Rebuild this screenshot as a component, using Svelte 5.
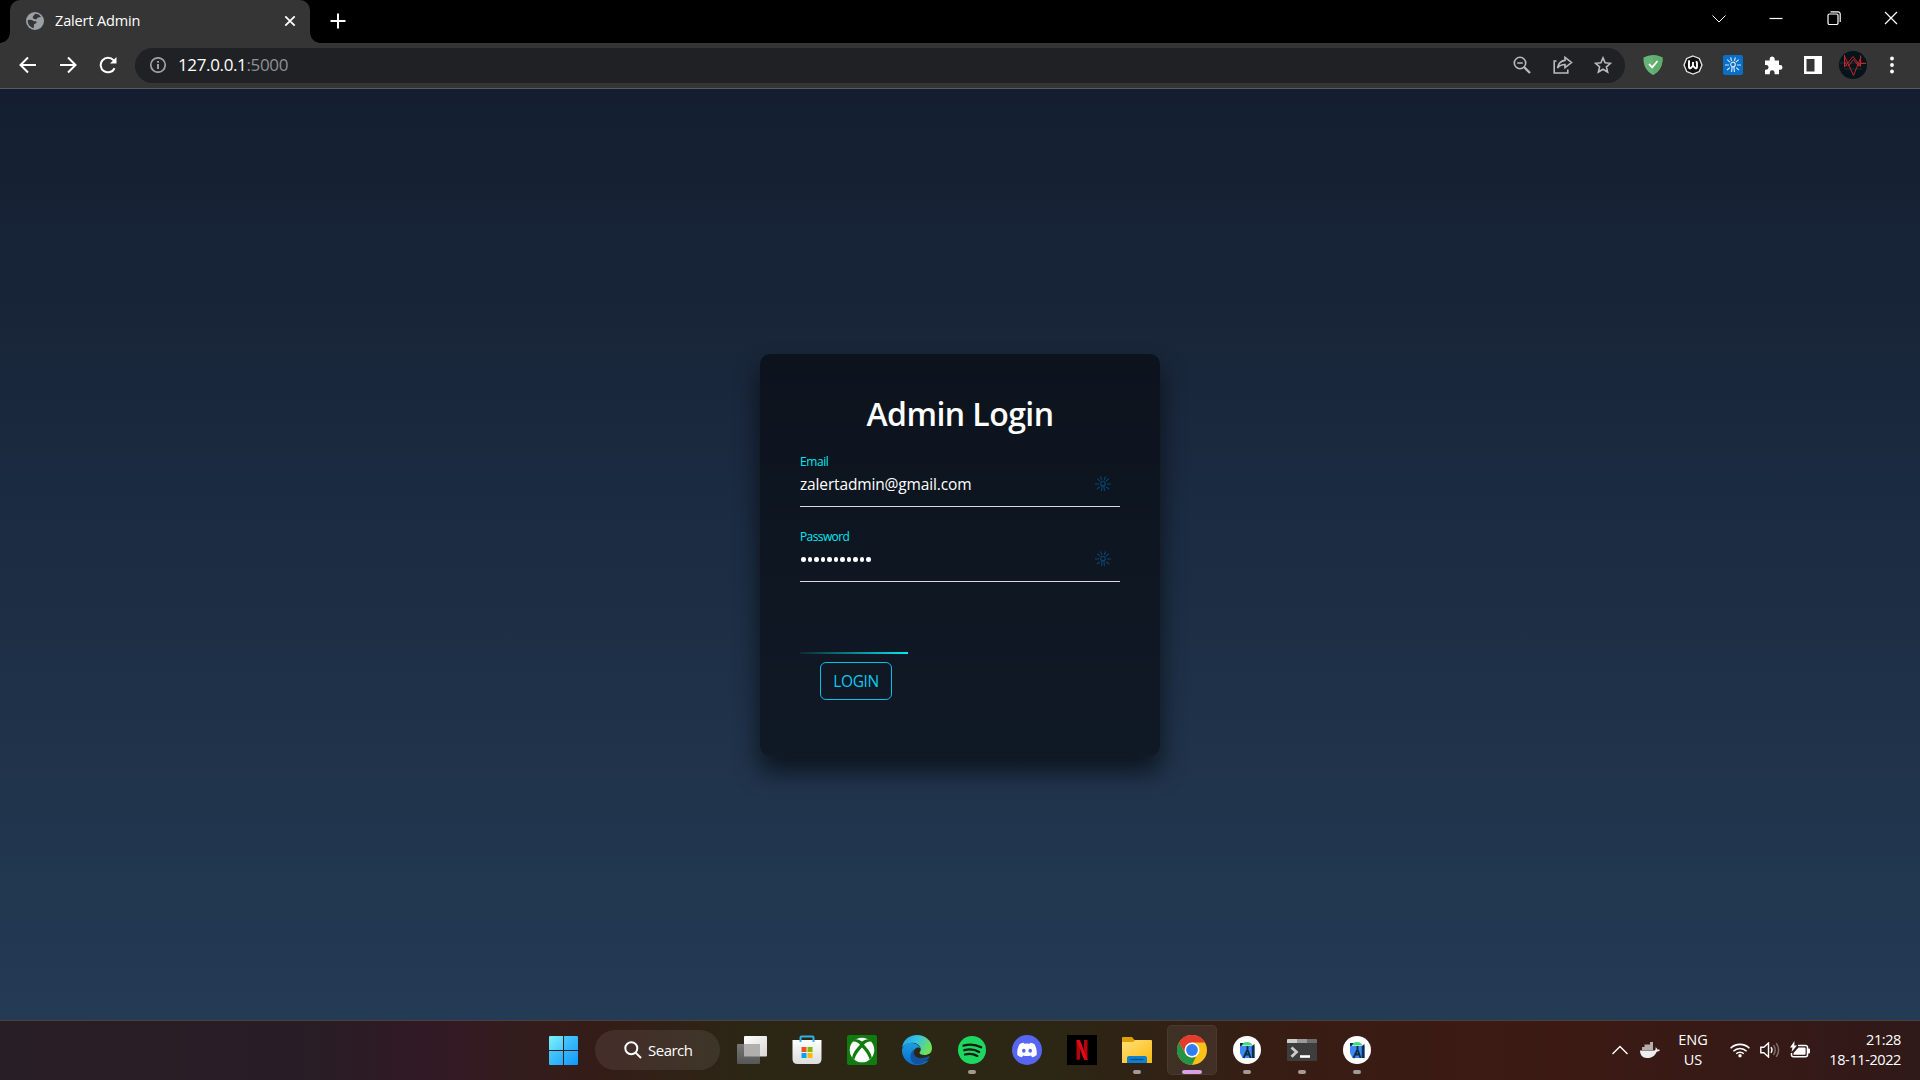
<script>
  const dots = Array.from({ length: 11 }, (_, i) => i);
</script>

{#snippet sun(color, w)}
  <svg viewBox="0 0 16 16" width="16" height="16" fill="none" stroke={color} stroke-width={w}>
    <circle cx="8" cy="7.5" r="2.3" />
    <path d="M7.2 9.5 6.5 15M8.8 9.5 9.5 15M0 8h4M12 8h4M2.2 2.6l2.9 2.5M13.8 2.6l-2.9 2.5M5.6.3l1 3.6M10.4.3l-1 3.6M2 13l2.900-2.400M14 13l-2.900-2.400" />
  </svg>
{/snippet}

{#snippet studio()}
  <svg viewBox="0 0 28 28" width="28" height="28">
    <circle cx="14" cy="14" r="14" fill="#fff" />
    <path d="M7 10h14.500v12H9.500L7 17z" fill="#4285f4" />
    <path d="M8.500 9.500C9 7.500 11 6 14 6s4.800 1.200 5.300 3.500z" fill="#3ddc84" />
    <path d="M7 7h3.500L8.500 10H7zM18.800 10l2.700-2v14h-2.700z" fill="#0b3045" />
    <path d="M14.500 10v5M14 14.500 10.500 22M15 14.500l2.500 7.500M11.500 18.500h5" stroke="#073042" stroke-width="1.800" fill="none" />
  </svg>
{/snippet}

<div class="desktop">
  <header class="tabs">
    <div class="tab">
      <svg class="globe" viewBox="0 0 18 18" width="18" height="18">
        <circle cx="9" cy="9" r="9" fill="#9aa0a6" />
        <path d="M1.800 8.200c1.900-.6 3.700-.6 5 .3 1 .8 2 .9 3 .8.9.2 1 1.200.3 1.900-.7.500-1.900.500-2.100 1.500-.1 1 .2 2.300-.5 3.200C4.300 15.400 1.400 12.300 1.800 8.200zM9.200 1.800c2.300 0 4.500 1.200 5.800 3.200-1.200-.2-1.900.6-3 .4-.8 0-.6 1-1.300 1.500-.8.5-1.700.2-2.600 0C7 6.500 6.200 5.600 7 4.600 7.600 3.800 8.200 2.800 9.200 1.800z" fill="#353535" />
      </svg>
      <span class="tabname">Zalert Admin</span>
      <svg class="tabx" viewBox="0 0 12 12" width="12" height="12" stroke="#fff" stroke-width="1.800"><path d="M1.300 1.300l9.400 9.400M10.700 1.300 1.300 10.700" /></svg>
    </div>
    <svg class="plus" viewBox="0 0 16 16" width="16" height="16" stroke="#fff" stroke-width="2"><path d="M8 .5v15M.5 8h15" /></svg>
    <div class="winctl">
      <svg class="thin" viewBox="0 0 14 14" width="14" height="14"><path d="M.5 4.500 7 11 13.500 4.500" /></svg>
      <svg viewBox="0 0 14 14" width="14" height="14"><path d="M.5 7.500h13" /></svg>
      <svg viewBox="0 0 14 14" width="14" height="14"><rect x="1" y="3" width="10" height="10.500" rx="1.500" /><path d="M3.500.8H11a2.200 2.200 0 0 1 2.200 2.200v8" /></svg>
      <svg viewBox="0 0 14 14" width="14" height="14"><path d="M1 1l12 12M13 1 1 13" /></svg>
    </div>
  </header>

  <nav class="toolbar">
    <div class="navs">
      <svg viewBox="0 0 18 18" width="18" height="18"><path d="M17 9H2M9 1.500 1.500 9 9 16.500" /></svg>
      <svg viewBox="0 0 18 18" width="18" height="18"><path d="M1 9h15M9 1.500 16.500 9 9 16.500" /></svg>
      <svg viewBox="0 0 18 18" width="18" height="18"><path d="M15.600 12.200A7.300 7.300 0 1 1 14.500 4.200l1.500 1.800" /><path d="M17.500 1v6.500H11z" fill="#fff" stroke="none" /></svg>
    </div>
    <div class="omni">
      <svg viewBox="0 0 16 16" width="16" height="16" fill="none" stroke="#9aa0a6" stroke-width="1.700"><circle cx="8" cy="8" r="7.200" /><path d="M8 7v5M8 4v1.800" stroke-width="2" /></svg>
      <span class="url">127.0.0.1<i>:5000</i></span>
      <div class="omniicons">
        <svg viewBox="0 0 18 18" width="18" height="18"><circle cx="7" cy="7" r="5.700" /><path d="M4.200 7h5.600" stroke-width="1.500" /><path d="m11 11 6 6" stroke-width="2.300" /></svg>
        <svg viewBox="0 0 20 18" width="20" height="18"><path d="M3.500 5H1.200v12h13.600v-3.500" /><path d="M12 1.300 18.500 6.500 12 11.700V8.500c-3.500 0-5.600 1.100-7.500 3.500C5.200 8 7.500 5 12 4.400z" /></svg>
        <svg viewBox="0 0 18 18" width="18" height="18"><path d="m9 1.900 2.100 4.900 5.300.5-4 3.500 1.200 5.200L9 13.200 4.400 16l1.200-5.200-4-3.500 5.300-.5z" /></svg>
      </div>
    </div>
    <div class="exts">
      <svg viewBox="0 0 20 20" width="20" height="20"><path d="M.5 2.500Q5 0 10 0t9.500 2.500c.5 8-3 14-9.500 17.500C3.500 16.500 0 10.500.5 2.500z" fill="#67b279" /><path d="M10 0q5 0 9.500 2.500c.5 8-3 14-9.500 17.500z" fill="#5fad6a" /><path d="m6 9 3.200 3.400L14.500 6" fill="none" stroke="#fff" stroke-width="1.800" /></svg>
      <svg viewBox="0 0 20 20" width="20" height="20"><path d="m10 1 6.300 2.500L19 10l-2.700 6.500L10 19l-6.300-2.500L1 10l2.700-6.500z" fill="#111" stroke="#e8e8e8" stroke-width="1.300" /><path d="M5.200 6.300h.8v5.400q0 1.600 1.500 1.600L10 10.800l2.500 2.500q1.500 0 1.500-1.600V8q0-1.400-1.300-1.400M10 7v4" fill="none" stroke="#fff" stroke-width="1.900" /></svg>
      <span class="blue">{@render sun('#cfe6fa', 1.2)}</span>
      <svg viewBox="0 0 20 20" width="20" height="20"><path d="M2 5.500h4.700V4a2.500 2.500 0 0 1 5 0v1.500H16v4.600h1.200a2.300 2.300 0 0 1 0 4.600H16v4.500h-4.400v-1.500a2.400 2.400 0 0 0-4.800 0v1.500H2v-4.500h1.200a2.400 2.400 0 0 0 0-4.800H2z" fill="#fff" /></svg>
      <svg viewBox="0 0 18 18" width="18" height="18"><path d="M0 0h18v18H0zM2.500 3v12.500h8V3z" fill="#fff" fill-rule="evenodd" /></svg>
      <svg viewBox="0 0 28 28" width="28" height="28"><circle cx="14" cy="14" r="14" fill="#061318" /><path d="M1 12h26M5 18h18" stroke="#13333a" /><path d="M5.500 4v12L14 5.500l7.500 10V4.500M5.500 5l9 19.500L22 6M9 15.500l5.500-7L20 15.500M5.500 10l2.500 5M22 10l-2.500 5M22 12.500h5" fill="none" stroke="#c1252d" stroke-width="1" /></svg>
      <svg viewBox="0 0 4 18" width="4" height="18" fill="#fff"><circle cx="2" cy="2.500" r="1.900" /><circle cx="2" cy="9" r="1.900" /><circle cx="2" cy="15.500" r="1.900" /></svg>
    </div>
  </nav>

  <main>
    <form class="card" onsubmit={(e) => e.preventDefault()}>
      <h2><span>Admin Login</span></h2>
      <div class="field">
        <div class="label">Email</div>
        <div class="value"><span class="mail">zalertadmin@gmail.com</span><span class="hint">{@render sun('#0b4674', 1.1)}</span></div>
      </div>
      <div class="field">
        <div class="label tight">Password</div>
        <div class="value"><span class="dots">{#each dots as d (d)}<b></b>{/each}</span><span class="hint">{@render sun('#0b4674', 1.1)}</span></div>
      </div>
      <div class="action">
        <div class="beam"></div>
        <button type="button"><span>LOGIN</span></button>
      </div>
    </form>
  </main>

  <footer>
    <div class="apps">
      <div class="app">
        <svg viewBox="0 0 29 29" width="29" height="29">
          <defs><linearGradient id="win" x1="0" y1="0" x2="1" y2="1"><stop offset="0" stop-color="#7af0ff" /><stop offset="1" stop-color="#4accfb" /></linearGradient>
            <linearGradient id="win2" x1="0" y1="0" x2="1" y2="1"><stop offset="0" stop-color="#62dcfb" /><stop offset="1" stop-color="#0f97fb" /></linearGradient></defs>
          <path d="M0 1q0-1 1-1h13v14H0z" fill="url(#win)" /><path d="M15 0h13q1 0 1 1v13H15zM0 15h14v14H1q-1 0-1-1zM15 15h14v13q0 1-1 1H15z" fill="url(#win2)" />
        </svg>
      </div>
      <div class="search">
        <svg viewBox="0 0 18 18" width="18" height="18" fill="none" stroke="#fff" stroke-width="2"><circle cx="7.300" cy="7.300" r="6" /><path d="m11.600 11.600 5.400 5.400" /></svg>
        <span>Search</span>
      </div>
      <div class="app">
        <svg viewBox="0 0 30 28" width="30" height="28">
          <defs><linearGradient id="tv" x1="0" y1="0" x2="1" y2="1"><stop offset="0" stop-color="#fff" /><stop offset="1" stop-color="#d8d6d4" /></linearGradient>
            <linearGradient id="tv2" x1="0" y1="0" x2="0" y2="1"><stop offset="0" stop-color="#777" /><stop offset="1" stop-color="#565656" /></linearGradient></defs>
          <rect x="7" width="23" height="20.500" rx="1" fill="url(#tv)" /><rect y="8" width="23" height="20" rx="1" fill="url(#tv2)" /><path d="M7 8h16v12.500H7z" fill="#b0afae" />
        </svg>
      </div>
      <div class="app">
        <svg viewBox="0 0 30 30" width="30" height="30">
          <defs><linearGradient id="st" x1="0" y1="0" x2="0" y2="1"><stop offset="0" stop-color="#fff" /><stop offset="1" stop-color="#dcdcdc" /></linearGradient></defs>
          <path d="M.5 5h29v19q0 5-5 5h-19q-5 0-5-5z" fill="url(#st)" /><path d="M8.500 7V2.500q0-1 1-1h11q1 0 1 1V7" fill="none" stroke="#29b5ea" stroke-width="2" />
          <path d="M9.500 12h5v5h-5z" fill="#f25022" /><path d="M15.500 12h5v5h-5z" fill="#7fba00" /><path d="M9.500 18h5v5h-5z" fill="#00a4ef" /><path d="M15.500 18h5v5h-5z" fill="#ffb900" />
        </svg>
      </div>
      <div class="app">
        <svg viewBox="0 0 30 30" width="30" height="30"><rect width="30" height="30" rx="2" fill="#107c10" /><circle cx="15" cy="15" r="12.300" fill="#fff" /><path d="M7 4.500C10 3.500 13 5 15 6.500 17 5 20 3.500 23 4.500l1.500 2.200C21.500 6 18.500 8 17 9.800c4 4 7.500 9 7.800 13l-2.300 1.700C21.500 20 18 15.500 15 12.500c-3 3-6.500 7.500-7.500 12l-2.300-1.700c.3-4 3.800-9 7.800-13C11.500 8 8.500 6 5.500 6.700z" fill="#107c10" /></svg>
      </div>
      <div class="app">
        <svg viewBox="0 0 30 30" width="30" height="30">
          <defs><linearGradient id="e1" x1="0" y1="0" x2="1" y2=".4"><stop offset="0" stop-color="#1e9fe0" /><stop offset=".5" stop-color="#35c1e8" /><stop offset="1" stop-color="#6fe05a" /></linearGradient>
            <linearGradient id="e2" x1="0" y1="0" x2="0" y2="1"><stop offset="0" stop-color="#1b9de2" /><stop offset="1" stop-color="#0a6ccb" /></linearGradient></defs>
          <path d="M0 13C1 5 7 0 15 0c8.500 0 15 6 15 13 0 5-3.500 7-7.500 7-3.500 0-5-1.200-5-2.200 0-.8 1.300-1.600 1.300-3.600C18.800 11 14 7 8.500 8 4 8.700 1 11 0 13z" fill="url(#e1)" />
          <path d="M0 14.500C1.500 9.500 6 7.500 10 8c4.500.5 8 3 8.700 5.500-1-1-2.700-1.200-4.200-.6C10 15 11 22 16 25c3 2 7 2 11 .2C24 28.500 20 30 15 30 6 30-.5 22.500 0 14.500z" fill="url(#e2)" />
          <path d="M12 14.500c-1.500 6.500 3 11.500 14.500 6.800.8-.3 1.500.2 1 1C22 31 8.500 32 8.500 21.500c0-3 1.500-5.500 3.500-7z" fill="#12529f" />
        </svg>
      </div>
      <div class="app run">
        <svg viewBox="0 0 28 28" width="28" height="28"><circle cx="14" cy="14" r="14" fill="#1ed760" /><path d="M5.500 9.600c6-1.700 12.300-1.200 17.600 1.700M6.300 14.200c5-1.400 10.500-.8 14.900 1.700M7 18.500c4.400-1.200 8.700-.6 12.300 1.400" fill="none" stroke="#111d12" stroke-width="2.300" stroke-linecap="round" /></svg>
      </div>
      <div class="app">
        <svg viewBox="0 0 30 30" width="30" height="30"><circle cx="15" cy="15" r="15" fill="#5865f2" /><path d="M12.200 8 11.500 7.800Q9 8.200 7.500 9.300C5.600 12.600 5 16 5.300 20q2 1.700 4.600 2.300l1.100-1.800q4 1.200 8 0l1.100 1.800q2.600-.6 4.600-2.300c.3-4-.3-7.400-2.200-10.700Q21 8.200 18.500 7.800L17.800 8.800q-2.800-.5-5.600 0z" fill="#fff" /><ellipse cx="11.800" cy="15.700" rx="1.800" ry="2" fill="#5865f2" /><ellipse cx="18.200" cy="15.700" rx="1.800" ry="2" fill="#5865f2" /></svg>
      </div>
      <div class="app">
        <svg viewBox="0 0 30 30" width="30" height="30"><path d="M0 0h30v30H0z" fill="#000" /><path d="M9.500 5H13v19.500l-3.500.5zM17 5h3.500v20l-3.500-.5z" fill="#b1060f" /><path d="M9.500 5H13l7.500 20-3.500-.5z" fill="#e50914" /></svg>
      </div>
      <div class="app run">
        <svg viewBox="0 0 30 26" width="30" height="26">
          <defs><linearGradient id="fo" x1="0" y1="0" x2="1" y2="1"><stop offset="0" stop-color="#ffe07a" /><stop offset="1" stop-color="#fcba0e" /></linearGradient></defs>
          <path d="M0 1q0-1 1-1h9l3 3.500V8H0z" fill="#e0a005" /><path d="M0 5h11l2-2h16q1 0 1 1v22H0z" fill="url(#fo)" /><path d="M5 26v-5q0-2 2-2h16q2 0 2 2v5z" fill="#0f80cf" /><path d="M8.500 22.500h13" stroke="#0a4c86" stroke-width="1.200" />
        </svg>
      </div>
      <div class="app active">
        <svg viewBox="0 0 30 30" width="30" height="30"><circle cx="15" cy="15" r="15" fill="#fbc116" /><path d="M2 7.500A15 15 0 0 1 28 7.500H15L8.500 18.800z" fill="#e33b2e" /><path d="M2 7.500 8.500 18.800c1.500 2.600 4 3.700 6.500 3.700l4-.9L15 30A15 15 0 0 1 2 7.500z" fill="#269245" /><circle cx="15" cy="15" r="7.500" fill="#fff" /><circle cx="15" cy="15" r="5.900" fill="#327ef0" /></svg>
      </div>
      <div class="app run">{@render studio()}</div>
      <div class="app run">
        <svg viewBox="0 0 30 22" width="30" height="22"><rect width="30" height="22" rx="1" fill="#3d3d3d" /><path d="M0 4V1q0-1 1-1h9v4z" fill="#ccc" /><path d="M10 0h10v4H10z" fill="#999" /><path d="M20 0h9q1 0 1 1v3H20z" fill="#6c6c6c" /><path d="m4.500 8.500 5 4.500-5 4.800" fill="none" stroke="#ccc" stroke-width="2.800" /><path d="M13 17.500h10" stroke="#fff" stroke-width="2.600" /></svg>
      </div>
      <div class="app run">{@render studio()}</div>
    </div>
    <div class="tray">
      <svg class="chev" viewBox="0 0 16 10" width="16" height="10" fill="none" stroke="#fff" stroke-width="1.400"><path d="m.5 9 7.500-7.500L15.500 9" /></svg>
      <svg class="whale" viewBox="0 0 20 16" width="20" height="16"><path d="M0 8.500h14.500c1.200-.6 1.300-2 1-3.300 1.200.5 1.700 1.400 1.800 2.300 1 0 2 0 2.700.5-.7 1.300-2 1.700-3.300 1.700C15 14 11.500 16 7 16 2.500 16 0 13 0 8.500z" fill="#eee" /><path d="M2 5h11v3H2zM4.500 2.500H13V5H4.500zM10 0h3v2.500h-3z" fill="#b5aeac" /></svg>
      <div class="lang"><span class="eng">ENG</span><span class="us">US</span></div>
      <svg class="wifi" viewBox="0 0 20 16" width="20" height="16" fill="none" stroke="#fff" stroke-width="1.600"><path d="M.6 6.300a13.200 13.200 0 0 1 18.800 0M3.400 9.200a9.300 9.300 0 0 1 13.200 0M6.200 11.800a5.400 5.400 0 0 1 7.600 0" /><circle cx="10" cy="13.800" r="1.700" fill="#fff" stroke="none" /></svg>
      <svg class="vol" viewBox="0 0 20 16" width="20" height="16" fill="none" stroke="#fff" stroke-width="1.400"><path d="M.8 5.200h3L8.500 1v14l-4.700-4.200h-3z" /><path d="M11 5.200q2 2.800 0 5.600" /><path d="M13.500 3.200q3.500 4.800 0 9.600M16.200 1.200q4.800 6.800 0 13.600" stroke="#85726e" /></svg>
      <svg class="bat" viewBox="0 0 20 18" width="20" height="18"><path d="M8 4.500h7.500q2 0 2 2v7.300q0 2-2 2H3.500q-2 0-2-2V12" fill="none" stroke="#fff" stroke-width="1.500" /><path d="M8.500 6.500h6.200q.9 0 .9.900v5.400q0 .9-.9.900H3.500V12zM18 7.500h1q1 0 1 1v3q0 1-1 1h-1zM4.500 0 0 6.500h2.500L1.500 11 7 4.500H4.300z" fill="#fff" /></svg>
      <div class="clock"><span class="time">21:28</span><span class="date">18-11-2022</span></div>
    </div>
  </footer>
</div>

<style>
  :global(body) { margin: 0; overflow: hidden; }
  .desktop { width: 1920px; height: 1080px; display: flex; flex-direction: column; font-family: "Open Sans", "Noto Sans", sans-serif; color: #fff; overflow: hidden; }
  svg { display: block; flex: none; }
  span { white-space: nowrap; }

  .tabs { height: 43px; background: #000; display: flex; align-items: flex-start; flex: none; box-sizing: border-box; }
  .tab { margin-left: 10px; width: 300px; height: 43px; background: #353535; border-radius: 10px 10px 0 0; display: flex; align-items: center; box-sizing: border-box; padding: 0 15px 1px 16px; position: relative; }
  .tab::before, .tab::after { content: ""; position: absolute; bottom: 0; width: 10px; height: 10px; }
  .tab::before { left: -10px; background: radial-gradient(circle at 0 0, #000 9.5px, #353535 10px); }
  .tab::after { right: -10px; background: radial-gradient(circle at 100% 0, #000 9.5px, #353535 10px); }
  .tabname { margin-left: 11px; flex: 1; font-size: 14.5px; line-height: 20px; letter-spacing: -0.15px; }
  .tabx { margin-right: -1px; }
  .plus { margin: 13px 0 0 20px; }
  .winctl { margin-left: auto; display: flex; gap: 43.3px; padding: 11px 22px 0 0; }
  .winctl svg { fill: none; stroke: #fff; stroke-width: 1.2; }
  .winctl .thin { stroke-width: 1; }

  .toolbar { height: 46px; background: #353535; border-bottom: 1px solid #5c5b58; flex: none; box-sizing: border-box; display: flex; align-items: center; }
  .navs { display: flex; gap: 22px; margin-left: 19px; width: 98px; padding-bottom: 1px; fill: none; stroke: #fff; stroke-width: 2; }
  .omni { margin-left: 18px; width: 1490px; height: 35px; border-radius: 18px; background: #202124; display: flex; align-items: center; box-sizing: border-box; padding: 0 13px 1px 15px; }
  .url { font-size: 17px; margin-left: 12px; line-height: 24px; letter-spacing: -0.36px; }
  .url i { font-style: normal; color: #8d9196; }
  .omniicons { margin-left: auto; display: flex; gap: 21.5px; fill: none; stroke: #b9babb; stroke-width: 1.6; }
  .exts { display: flex; align-items: center; margin-left: 17.5px; gap: 20px; padding-bottom: 1px; }
  .exts svg:nth-child(5) { margin: 0 1px; }
  .exts svg:nth-child(6) { margin: 0 -4px; }
  .exts svg:nth-child(7) { margin-left: 7.5px; }
  .blue { width: 20px; height: 20px; border-radius: 2px; background: #0a6fc9; display: grid; place-items: center; }

  main { height: 931px; flex: none; background: linear-gradient(#141e30, #243b55); display: flex; justify-content: center; align-items: flex-start; }
  .card { margin-top: 265px; width: 400px; height: 402px; box-sizing: border-box; padding: 40px; border-radius: 10px; background: rgba(0, 0, 0, 0.5); box-shadow: 0 15px 25px rgba(0, 0, 0, 0.6); display: flex; flex-direction: column; }
  h2 { margin: 0 0 9px; font-size: 32px; line-height: 40px; font-weight: 600; text-align: center; letter-spacing: -0.55px; }
  .field { height: 64px; margin-bottom: 11px; border-bottom: 1px solid #dadbdc; box-sizing: border-box; padding-top: 11px; }
  .label { font-size: 12px; line-height: 16px; color: #03e9f4; letter-spacing: -0.4px; }
  .tight { letter-spacing: -0.6px; }
  .value { display: flex; align-items: center; height: 28px; justify-content: space-between; font-size: 15.5px; line-height: 24px; padding-right: 9px; }
  .mail { letter-spacing: -0.15px; }
  .dots { display: flex; gap: 2px; padding: 1px 0 0 1px; }
  .dots b { width: 4.5px; height: 4.5px; border-radius: 50%; background: #fff; }
  .action { margin-top: 59px; width: 108px; display: flex; flex-direction: column; align-items: flex-start; }
  .beam { width: 108px; height: 2px; background: linear-gradient(90deg, rgba(3, 233, 244, 0.08), #03e9f4); }
  button { margin: 8px 0 0 20px; width: 72px; height: 38px; box-sizing: border-box; padding: 0; background: transparent; border: 1px solid #0dbfe6; border-radius: 6px; color: #0dcaf0; font: 15.5px/24px "Open Sans", "Noto Sans", sans-serif; letter-spacing: -0.4px; }

  footer { height: 60px; flex: none; box-sizing: border-box; border-top: 1px solid #4a413a; background: linear-gradient(90deg, #281e26 0, #281d26 300px, #2d1a25 380px, #341a24 460px, #331c1c 520px, #341d17 610px, #2c2615 740px, #2c2615 1060px, #381c14 1300px, #3c1a13 1560px, #301919 1920px); display: flex; justify-content: space-between; }
  .apps { display: flex; align-items: center; margin-left: 538px; padding-bottom: 1px; }
  .app { width: 50px; height: 50px; margin-right: 5px; border-radius: 5px; display: grid; place-items: center; position: relative; box-sizing: border-box; }
  .run::after, .active::after { content: ""; position: absolute; bottom: 1px; left: 21px; width: 8px; height: 4px; border-radius: 2px; background: #a39a96; }
  .active { background: rgba(255, 255, 255, 0.07); box-shadow: inset 0 0 0 1px rgba(255, 255, 255, 0.05); }
  .active::after { left: 15px; width: 20px; background: #d9a1e4; }
  .search { width: 125px; height: 40px; border-radius: 20px; background: rgba(255, 255, 255, 0.08); margin: 0 7px 0 2px; display: flex; align-items: center; box-sizing: border-box; padding: 0 0 1px 29px; gap: 6px; font-size: 15px; letter-spacing: -0.5px; }
  .tray { display: flex; align-items: center; padding: 0 19px 2px 0; font-size: 14.5px; line-height: 20px; }
  .whale { margin-left: 12px; }
  .lang { margin-left: 18px; width: 30px; display: flex; flex-direction: column; align-items: center; }
  .wifi { margin-left: 22px; }
  .vol { margin-left: 10px; }
  .bat { margin-left: 10px; }
  .clock { margin-left: 20px; width: 71px; display: flex; flex-direction: column; align-items: flex-end; letter-spacing: -0.4px; }
</style>
